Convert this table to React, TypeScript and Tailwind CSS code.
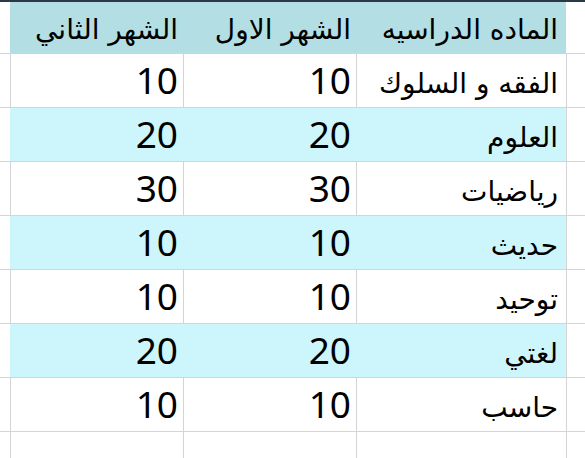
const rows = [
  { subject: "الفقه و السلوك", first: 10, second: 10 },
  { subject: "العلوم", first: 20, second: 20 },
  { subject: "رياضيات", first: 30, second: 30 },
  { subject: "حديث", first: 10, second: 10 },
  { subject: "توحيد", first: 10, second: 10 },
  { subject: "لغتي", first: 20, second: 20 },
  { subject: "حاسب", first: 10, second: 10 },
];

const arabic = "font-['DejaVu_Sans',sans-serif]";
const digits = "font-['Noto_Sans','DejaVu_Sans',sans-serif]";

function Row({
  subject,
  first,
  second,
  shaded,
}: {
  subject: string;
  first: number;
  second: number;
  shaded: boolean;
}) {
  const cell = shaded
    ? "bg-[#ccf6fb]"
    : "bg-white border-l border-[#d4d4d4]";
  return (
    <div className="flex h-[54px] border-b border-[#d4d4d4]">
      <div className="w-[19px] shrink-0 border-l border-[#d4d4d4] bg-white" />
      <div className={`flex w-[210px] shrink-0 items-end pb-[9px] pr-[8px] ${cell} ${arabic} text-[28px] leading-none text-black`}>
        {subject}
      </div>
      <div className={`flex w-[173px] shrink-0 items-end pb-[9px] pr-[5px] ${cell} ${digits} text-[37px] leading-none text-black`}>
        {first}
      </div>
      <div className={`flex w-[173px] shrink-0 items-end pb-[9px] pr-[5px] ${cell} ${digits} text-[37px] leading-none text-black`}>
        {second}
      </div>
      <div className="w-[10px] shrink-0 bg-white" />
    </div>
  );
}

export default function App() {
  return (
    <div dir="rtl" className="h-[458px] w-[585px] overflow-hidden bg-white">
      <div className="h-[2px] bg-[#2a3a44]" />
      <div className="flex h-[52px] border-b border-[#d4d4d4]">
        <div className="w-[19px] shrink-0 bg-white" />
        <div className={`flex w-[556px] shrink-0 items-end bg-[#b3dee4] pb-[9px] ${arabic} text-[28px] leading-none text-black`}>
          <div className="w-[210px] shrink-0 pr-[8px]">الماده الدراسيه</div>
          <div className="w-[173px] shrink-0 pr-[5px]">الشهر الاول</div>
          <div className="w-[173px] shrink-0 pr-[5px]">الشهر الثاني</div>
        </div>
        <div className="w-[10px] shrink-0 bg-white" />
      </div>
      {rows.map((row, i) => (
        <Row key={row.subject} {...row} shaded={i % 2 === 1} />
      ))}
      <div className="flex h-[54px] border-b border-[#d4d4d4]">
        <div className="w-[19px] shrink-0 border-l border-[#d4d4d4]" />
        <div className="w-[210px] shrink-0 border-l border-[#d4d4d4]" />
        <div className="w-[173px] shrink-0 border-l border-[#d4d4d4]" />
        <div className="w-[173px] shrink-0 border-l border-[#d4d4d4]" />
        <div className="w-[10px] shrink-0" />
      </div>
    </div>
  );
}
